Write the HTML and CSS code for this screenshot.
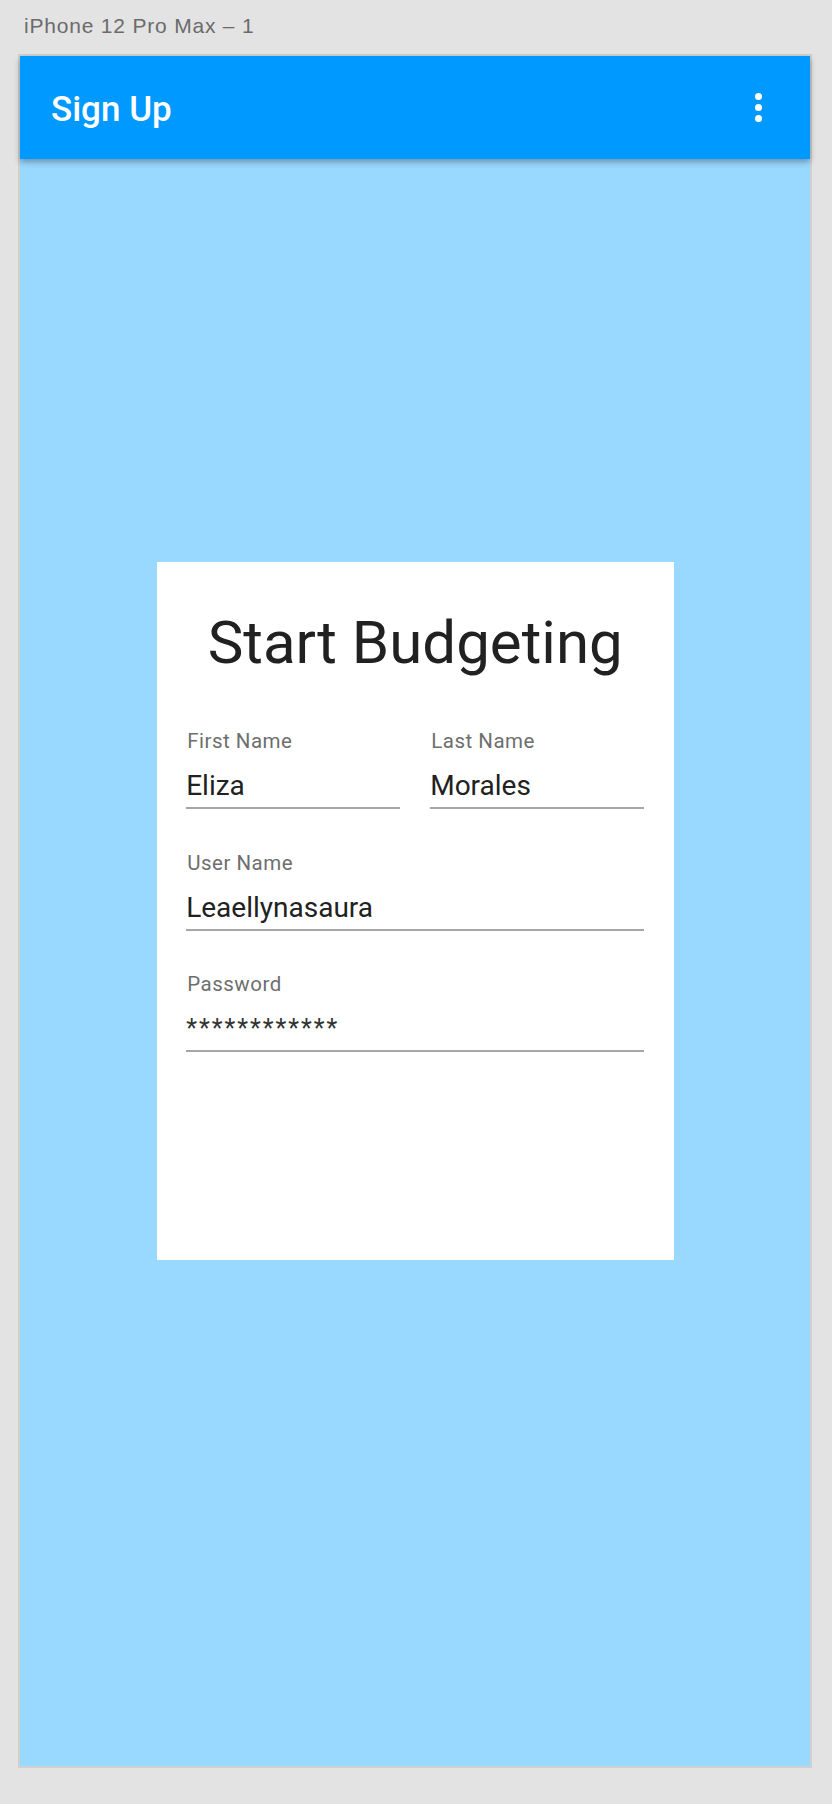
FILE: index.html
```html
<!DOCTYPE html>
<html lang="en">
<head>
<meta charset="utf-8">
<title>Sign Up</title>
<link rel="stylesheet" href="styles.css">
</head>
<body>
  <div class="artboard-label">iPhone 12 Pro Max – 1</div>
  <div class="device">
    <header class="app-bar">
      <h1 class="app-title">Sign Up</h1>
      <button class="menu" aria-label="More options">
        <span class="dot"></span>
        <span class="dot"></span>
        <span class="dot"></span>
      </button>
    </header>
    <main class="content">
      <section class="card">
        <h2 class="card-title">Start Budgeting</h2>
        <div class="row">
          <div class="field">
            <div class="label">First Name</div>
            <div class="value">Eliza</div>
          </div>
          <div class="field">
            <div class="label">Last Name</div>
            <div class="value">Morales</div>
          </div>
        </div>
        <div class="field">
          <div class="label">User Name</div>
          <div class="value">Leaellynasaura</div>
        </div>
        <div class="field">
          <div class="label">Password</div>
          <div class="value secret">************</div>
        </div>
      </section>
    </main>
  </div>
</body>
</html>
```
FILE: styles.css
```css
* {
  box-sizing: border-box;
}

html, body {
  margin: 0;
  padding: 0;
}

body {
  background: #e3e3e3;
  width: 832px;
  height: 1804px;
  overflow: hidden;
  font-family: Roboto, "Liberation Sans", sans-serif;
}

.artboard-label {
  font-family: "Liberation Sans", Arial, sans-serif;
  font-size: 21px;
  line-height: 24px;
  letter-spacing: 0.8px;
  color: #6b6b6b;
  padding: 14px 0 16px 24px;
}

.device {
  margin-left: 18px;
  width: 794px;
  height: 1714px;
  border: 2px solid #d0d0d0;
  background: #99d8ff;
  display: flex;
  flex-direction: column;
}

.app-bar {
  position: relative;
  z-index: 1;
  height: 103.4px;
  flex: none;
  background: #0099ff;
  display: flex;
  align-items: center;
  justify-content: space-between;
  padding: 4px 48px 0 31px;
  box-shadow: 0 3px 6px rgba(0, 0, 0, 0.32);
}

.app-title {
  margin: 0;
  font-size: 35px;
  line-height: 41px;
  font-weight: 500;
  color: #ffffff;
}

.menu {
  border: 0;
  background: none;
  padding: 0;
  margin-top: -4px;
  display: flex;
  flex-direction: column;
  gap: 4px;
}

.dot {
  display: block;
  width: 7px;
  height: 7px;
  border-radius: 50%;
  background: #ffffff;
}

.content {
  flex: 1;
  padding: 403px 0 0 136.7px;
}

.card {
  width: 517px;
  height: 698px;
  background: #ffffff;
  padding: 46px 29.5px 0 29.5px;
}

.card-title {
  margin: 0 0 51px;
  text-align: center;
  font-size: 60px;
  line-height: 70px;
  font-weight: 400;
  color: #212121;
}

.row {
  display: flex;
  gap: 30px;
  margin-bottom: 41.5px;
}

.row .field {
  flex: 1;
  margin-bottom: 0;
}

.field {
  border-bottom: 2px solid #a6a6a6;
  margin-bottom: 41.5px;
}

.label {
  font-size: 20.5px;
  line-height: 24px;
  letter-spacing: 0.5px;
  color: #6e6e6e;
  margin-bottom: 16px;
  padding-left: 1px;
}

.value {
  font-size: 28px;
  line-height: 34px;
  color: #212121;
  padding-bottom: 4px;
}

.secret {
  font-size: 25px;
  letter-spacing: 2px;
  color: #333333;
  padding-top: 0;
  line-height: 34px;
}
```
